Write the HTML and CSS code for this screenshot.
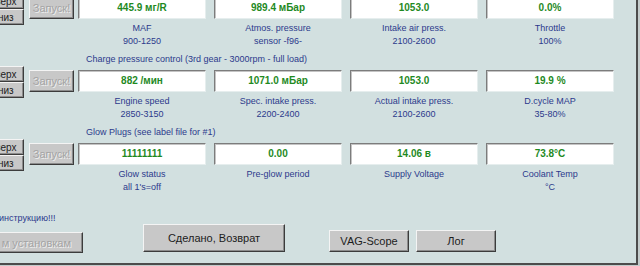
FILE: index.html
```html
<!DOCTYPE html>
<html lang="ru">
<head>
    <meta charset="UTF-8">
    <meta name="viewport" content="width=device-width, initial-scale=1.0">
    <title>Measuring Blocks</title>
    <link rel="stylesheet" href="styles.css">
</head>
<body>
    <div class="panel">
        <section class="group group-first">
            <div class="group-body">
                <div class="side">
                    <button class="btn btn-side">Вверх</button>
                    <button class="btn btn-side">Вниз</button>
                </div>
                <button class="btn btn-start" disabled>Запуск!</button>
                <div class="cells">
                    <div class="cell">
                        <div class="value">445.9 мг/R</div>
                        <div class="label">MAF</div>
                        <div class="label">900-1250</div>
                    </div>
                    <div class="cell">
                        <div class="value">989.4 мБар</div>
                        <div class="label">Atmos. pressure</div>
                        <div class="label">sensor -f96-</div>
                    </div>
                    <div class="cell">
                        <div class="value">1053.0</div>
                        <div class="label">Intake air press.</div>
                        <div class="label">2100-2600</div>
                    </div>
                    <div class="cell">
                        <div class="value">0.0%</div>
                        <div class="label">Throttle</div>
                        <div class="label">100%</div>
                    </div>
                </div>
            </div>
        </section>

        <section class="group">
            <div class="group-title">Charge pressure control (3rd gear - 3000rpm - full load)</div>
            <div class="group-body">
                <div class="side">
                    <button class="btn btn-side">Вверх</button>
                    <button class="btn btn-side">Вниз</button>
                </div>
                <button class="btn btn-start" disabled>Запуск!</button>
                <div class="cells">
                    <div class="cell">
                        <div class="value">882 /мин</div>
                        <div class="label">Engine speed</div>
                        <div class="label">2850-3150</div>
                    </div>
                    <div class="cell">
                        <div class="value">1071.0 мБар</div>
                        <div class="label">Spec. intake press.</div>
                        <div class="label">2200-2400</div>
                    </div>
                    <div class="cell">
                        <div class="value">1053.0</div>
                        <div class="label">Actual intake press.</div>
                        <div class="label">2100-2600</div>
                    </div>
                    <div class="cell">
                        <div class="value">19.9 %</div>
                        <div class="label">D.cycle MAP</div>
                        <div class="label">35-80%</div>
                    </div>
                </div>
            </div>
        </section>

        <section class="group">
            <div class="group-title">Glow Plugs (see label file for #1)</div>
            <div class="group-body">
                <div class="side">
                    <button class="btn btn-side">Вверх</button>
                    <button class="btn btn-side">Вниз</button>
                </div>
                <button class="btn btn-start" disabled>Запуск!</button>
                <div class="cells">
                    <div class="cell">
                        <div class="value">11111111</div>
                        <div class="label">Glow status</div>
                        <div class="label">all 1's=off</div>
                    </div>
                    <div class="cell">
                        <div class="value">0.00</div>
                        <div class="label">Pre-glow period</div>
                        <div class="label"></div>
                    </div>
                    <div class="cell">
                        <div class="value">14.06 в</div>
                        <div class="label">Supply Voltage</div>
                        <div class="label"></div>
                    </div>
                    <div class="cell">
                        <div class="value">73.8°C</div>
                        <div class="label">Coolant Temp</div>
                        <div class="label">°C</div>
                    </div>
                </div>
            </div>
        </section>

        <div class="footer">
            <div class="footer-left">
                <div class="note">инструкцию!!!</div>
                <button class="btn btn-reset" disabled>м установкам</button>
            </div>
            <button class="btn btn-done">Сделано, Возврат</button>
            <button class="btn btn-tool">VAG-Scope</button>
            <button class="btn btn-tool btn-log">Лог</button>
        </div>
    </div>
</body>
</html>
```

FILE: styles.css
```css
body {
    margin: 0;
    width: 640px;
    height: 266px;
    overflow: hidden;
    background-color: #c4cccc;
    font-family: "Liberation Sans", Arial, sans-serif;
}
.panel {
    width: 636px;
    height: 263px;
    background-color: #d2e0e0;
    border-right: 2px solid #4c4c4c;
    border-bottom: 2px solid #4c4c4c;
    overflow: hidden;
}
.group {
    margin-top: 5px;
}
.group-first {
    margin-top: -3px;
}
.group-title {
    margin: 0 0 5px 86px;
    font-size: 9px;
    line-height: 12px;
    color: #2c3a8c;
    white-space: nowrap;
}
.group-body {
    display: flex;
    align-items: flex-start;
}

/* classic raised buttons */
.btn {
    box-sizing: border-box;
    padding: 0;
    font-family: "Liberation Sans", Arial, sans-serif;
    color: #1c1c1c;
    background: #c8c8c8;
    border: 1px solid;
    border-color: #f4f4f4 #3c3c3c #3c3c3c #f4f4f4;
    box-shadow: inset -1px -1px #8c8c8c;
    white-space: nowrap;
}
.btn:disabled {
    color: #a4a4a4;
    text-shadow: 1px 1px #eeeeee;
}
.side {
    display: flex;
    flex-direction: column;
    margin: -4px 5px 0 -19px;
}
.btn-side {
    width: 43px;
    height: 16px;
    font-size: 10px;
    line-height: 13px;
}
.btn-start {
    width: 45px;
    height: 22px;
    margin-right: 4px;
    font-size: 11px;
}

.cells {
    display: flex;
    gap: 8px;
}
.cell {
    width: 128px;
    text-align: center;
}
.value {
    box-sizing: border-box;
    height: 22px;
    line-height: 20px;
    background: #ffffff;
    border: 1px solid;
    border-color: #7c7c7c #e6eeee #e6eeee #7c7c7c;
    box-shadow: inset 1px 1px #c4c4c4;
    color: #1f8a1f;
    font-size: 10px;
    font-weight: bold;
}
.label {
    height: 13px;
    line-height: 13px;
    font-size: 9px;
    color: #2c3a8c;
    white-space: nowrap;
}
.value + .label {
    margin-top: 3px;
}

.footer {
    display: flex;
    align-items: flex-end;
    padding-top: 18px;
}
.footer-left {
    display: flex;
    flex-direction: column;
    align-items: flex-end;
    width: 83px;
    margin-right: 60px;
}
.note {
    align-self: flex-start;
    margin-left: -1px;
    font-size: 9px;
    line-height: 12px;
    color: #2c3a8c;
    white-space: nowrap;
}
.btn-reset {
    width: 140px;
    height: 21px;
    margin-top: 8px;
    margin-left: -57px;
    font-size: 11px;
    text-align: right;
    padding-right: 11px;
}
.btn-done {
    width: 142px;
    height: 28px;
    margin: 0 44px 1px 0;
    font-size: 11px;
}
.btn-tool {
    width: 80px;
    height: 22px;
    margin-bottom: 1px;
    font-size: 11px;
}
.btn-log {
    margin-left: 7px;
}
```
